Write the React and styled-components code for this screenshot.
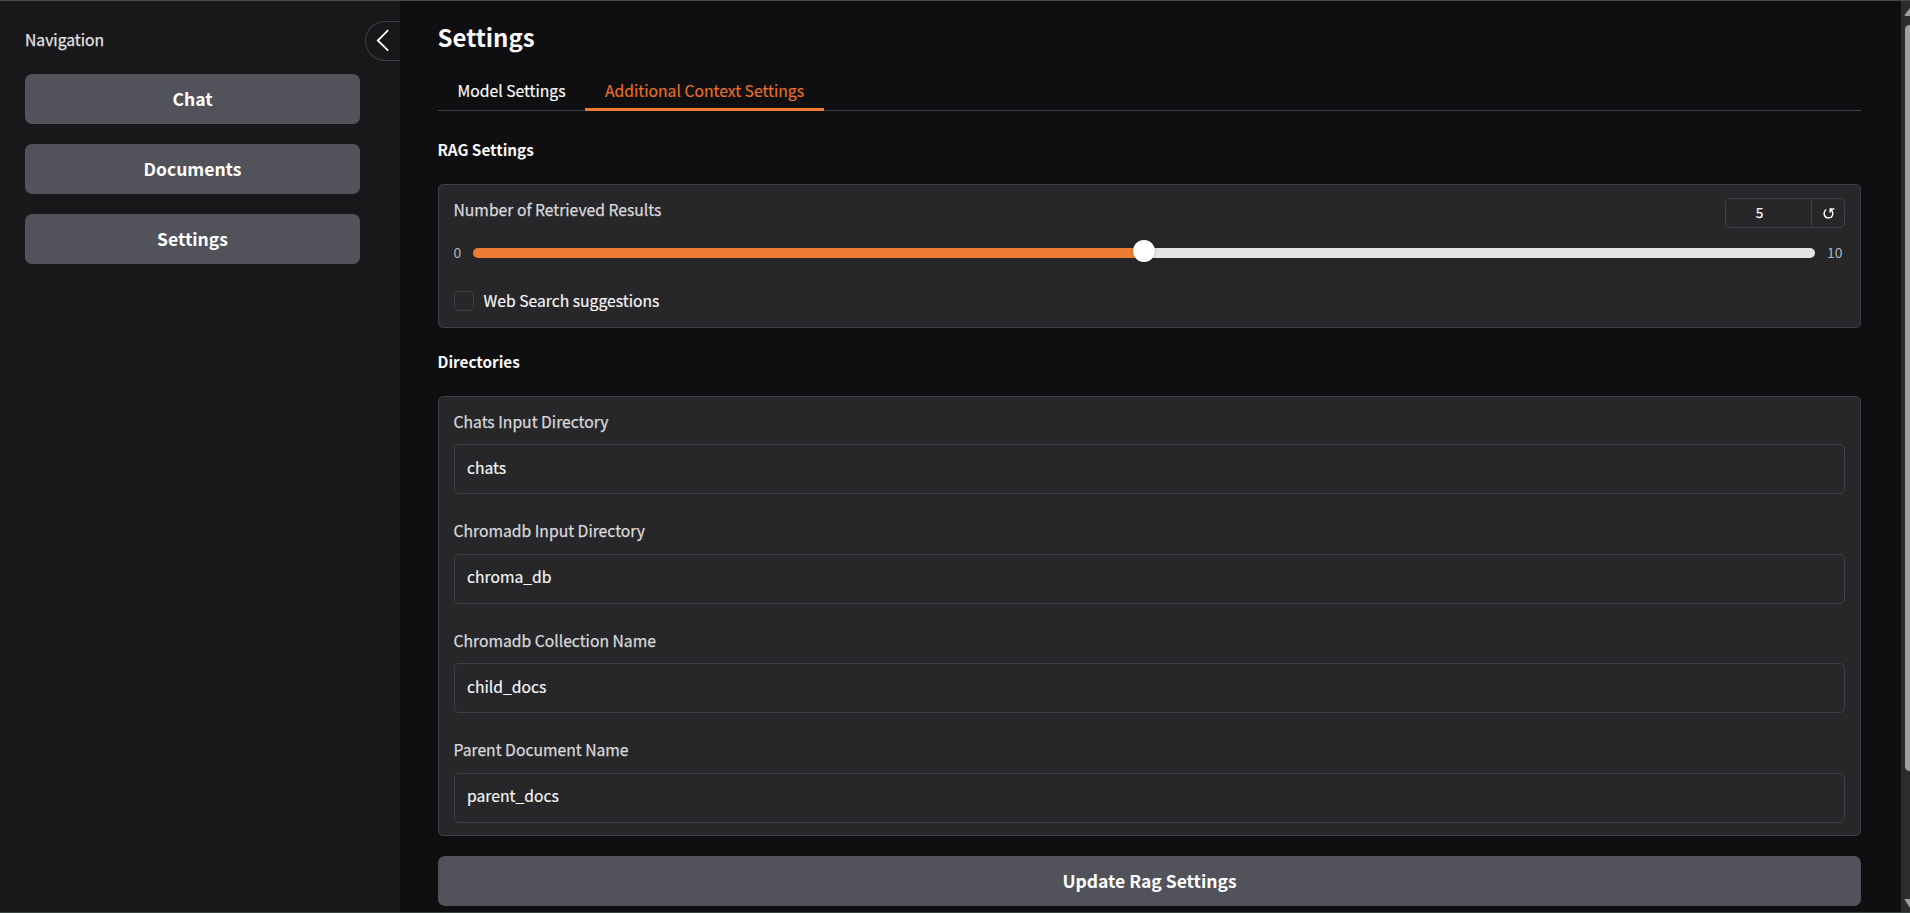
import React from "react";
import styled, { createGlobalStyle } from "styled-components";

const GlobalStyle = createGlobalStyle`
  *, *::before, *::after { box-sizing: border-box; }
  body {
    margin: 0;
    background: #0f0f11;
    color: #f8f8f9;
    font-family: "Noto Sans CJK SC", "Source Sans Pro", sans-serif;
    font-size: 15.7px;
    line-height: 26px;
    overflow: hidden;
  }
  button, input { font: inherit; color: inherit; }
`;

const Page = styled.div`
  display: flex;
  height: 913px;
  border-top: 1px solid #48494a;
  border-bottom: 1px solid #3c4444;
  overflow: hidden;
`;

const Sidebar = styled.aside`
  display: flex;
  flex-direction: column;
  flex: none;
  width: 400px;
  padding: 20px 0 0 25px;
  background: #18181a;
`;

const SidebarHeader = styled.div`
  display: flex;
  justify-content: space-between;
  height: 40px;
  margin-bottom: 13px;
`;

const SidebarTitle = styled.div`
  line-height: 38px;
  color: #e4e4e7;
  -webkit-text-stroke: 0.25px currentColor;
`;

const CollapseButton = styled.button`
  width: 35px;
  height: 40px;
  padding: 0;
  border: 1px solid #3f3f46;
  border-right: 0;
  border-radius: 20px 0 0 20px;
  background: transparent;

  svg { display: block; }
`;

const NavList = styled.nav`
  display: flex;
  flex-direction: column;
  gap: 20px;
  width: 335px;
`;

const Button = styled.button`
  width: 100%;
  height: 50px;
  flex: none;
  padding: 0;
  border: 0;
  border-radius: 7px;
  background: #52525b;
  color: #fff;
  font-size: 17.5px;
  font-weight: 700;
  line-height: 50px;
  text-align: center;
`;

const Main = styled.main`
  display: flex;
  flex-direction: column;
  width: 1423px;
  margin-left: 38px;
  flex: none;
`;

const Title = styled.h2`
  margin: 17px 0 0 -0.5px;
  height: 38px;
  font-size: 24px;
  font-weight: 700;
  line-height: 38px;
`;

const TabBar = styled.div`
  display: flex;
  height: 55px;
  padding-top: 15px;
  box-shadow: inset 0 -1px 0 #3f3f46;
`;

const Tab = styled.button`
  height: 40px;
  padding: 1px 20px 0 ${(p) => (p.$active ? "20px" : "19.5px")};
  width: ${(p) => (p.$active ? "239px" : "147px")};
  border: 0;
  border-bottom: 3px solid ${(p) => (p.$active ? "#ed7b34" : "transparent")};
  background: transparent;
  color: ${(p) => (p.$active ? "#ea6f2c" : "#fff")};
  line-height: 38px;
  white-space: nowrap;
  -webkit-text-stroke: 0.15px currentColor;
`;

const SectionTitle = styled.h3`
  margin: ${(p) => (p.$first ? "25px 0 22px -0.5px" : "20px 0 22px -0.5px")};
  font-size: 15.3px;
  font-weight: 700;
  line-height: 26px;
`;

const Card = styled.section`
  display: flex;
  flex-direction: column;
  flex: none;
  height: ${(p) => p.$height}px;
  padding: 11.5px 15px 0;
  border: 1px solid #3f3f46;
  border-radius: 5px;
  background: #27272a;
`;

const Label = styled.span`
  display: block;
  height: 26px;
  margin-left: -0.5px;
  color: #d9d9dc;
  -webkit-text-stroke: 0.25px currentColor;
`;

const SliderHead = styled.div`
  display: flex;
  justify-content: space-between;
  height: 31.5px;
`;

const NumberBox = styled.div`
  display: flex;
  width: 120px;
  height: 30px;
  margin-top: 1.5px;
  border: 1px solid #3f3f46;
  border-radius: 5px;
`;

const NumberValue = styled.div`
  flex: 1;
  padding-right: 18px;
  border-right: 1px solid #3f3f46;
  font-size: 13.7px;
  line-height: 26px;
  text-align: center;
  -webkit-text-stroke: 0.25px currentColor;
`;

const ResetButton = styled.button`
  display: flex;
  width: 32px;
  padding: 9px 0 0 11px;
  border: 0;
  background: transparent;
`;

const SliderRow = styled.div`
  display: flex;
  align-items: center;
  height: 20px;
  margin-top: 14px;
`;

const Bound = styled.span`
  width: ${(p) => (p.$end ? "30px" : "19px")};
  padding-left: ${(p) => (p.$end ? "12px" : "0")};
  margin-left: ${(p) => (p.$end ? "0" : "-0.5px")};
  margin-right: ${(p) => (p.$end ? "0" : "0.5px")};
  color: #b4b4bc;
  font-size: 13.9px;
  line-height: 20px;
`;

const Track = styled.div`
  display: flex;
  align-items: center;
  flex: 1;
  height: 10px;
  margin-top: 2px;
  border-radius: 5px;
  background: linear-gradient(to right, #ed7b34 50%, #e4e4e7 50%);
`;

const Thumb = styled.div`
  width: 22px;
  height: 22px;
  margin: -4px auto 0;
  border-radius: 50%;
  background: #fff;
  box-shadow: 0 0 2px rgba(0, 0, 0, 0.35);
`;

const CheckRow = styled.label`
  display: flex;
  align-items: center;
  gap: 9px;
  height: 26px;
  margin-top: 25px;
`;

const CheckBox = styled.span`
  width: 20px;
  height: 20px;
  margin-top: 1px;
  border: 1px solid #3f3f46;
  border-radius: 5px;
`;

const CheckText = styled.span`
  height: 26px;
  padding-top: 1px;
  margin-left: 0.5px;
  -webkit-text-stroke: 0.15px currentColor;
`;

const Field = styled.label`
  display: flex;
  flex-direction: column;
  flex: none;
  height: 109.6px;
`;

const FieldInput = styled.input`
  width: 100%;
  height: 50px;
  margin-top: 9.55px;
  padding: 0 12px 3.7px;
  border: 1px solid #3f3f46;
  border-radius: 5px;
  outline: 0;
  background: transparent;
  -webkit-text-stroke: 0.15px currentColor;
`;

const Submit = styled(Button)`
  margin-top: 20px;
`;

const Scrollbar = styled.div`
  display: flex;
  flex-direction: column;
  justify-content: space-between;
  flex: none;
  width: 9px;
  margin-left: 40px;
  background: #2c2c2c;

  svg { display: block; }
`;

const ScrollThumb = styled.div`
  height: 746px;
  margin: 0 -4px 0 4px;
  border-radius: 5px;
  background: #9f9f9f;
`;

const ScrollEnd = styled.div`
  height: ${(p) => p.$height}px;
`;

const fields = [
  ["Chats Input Directory", "chats"],
  ["Chromadb Input Directory", "chroma_db"],
  ["Chromadb Collection Name", "child_docs"],
  ["Parent Document Name", "parent_docs"],
];

export default function App() {
  return (
    <>
      <GlobalStyle />
      <Page>
        <Sidebar>
          <SidebarHeader>
            <SidebarTitle>Navigation</SidebarTitle>
            <CollapseButton aria-label="Collapse">
              <svg width="34" height="38" fill="none" stroke="#fff" strokeWidth="1.8">
                <path d="M22.2 8.2 L11.8 18.5 L22.2 28.7" />
              </svg>
            </CollapseButton>
          </SidebarHeader>
          <NavList>
            <Button>Chat</Button>
            <Button>Documents</Button>
            <Button>Settings</Button>
          </NavList>
        </Sidebar>
        <Main>
          <Title>Settings</Title>
          <TabBar>
            <Tab>Model Settings</Tab>
            <Tab $active>Additional Context Settings</Tab>
          </TabBar>
          <SectionTitle $first>RAG Settings</SectionTitle>
          <Card $height={144}>
            <SliderHead>
              <Label>Number of Retrieved Results</Label>
              <NumberBox>
                <NumberValue>5</NumberValue>
                <ResetButton aria-label="Reset">
                  <svg width="12" height="12" fill="none" stroke="#fff" strokeWidth="1.4">
                    <path d="M3.2 1.5 C-0.4 4.3 0.9 9.9 5.4 9.9 C10 9.9 11.3 4.6 7.8 1.6" />
                    <path d="M11.3 1 H7.2 V4.8" />
                  </svg>
                </ResetButton>
              </NumberBox>
            </SliderHead>
            <SliderRow>
              <Bound>0</Bound>
              <Track>
                <Thumb />
              </Track>
              <Bound $end>10</Bound>
            </SliderRow>
            <CheckRow>
              <CheckBox />
              <CheckText>Web Search suggestions</CheckText>
            </CheckRow>
          </Card>
          <SectionTitle>Directories</SectionTitle>
          <Card $height={440}>
            {fields.map(([label, value]) => (
              <Field key={label}>
                <Label>{label}</Label>
                <FieldInput defaultValue={value} />
              </Field>
            ))}
          </Card>
          <Submit>Update Rag Settings</Submit>
        </Main>
        <Scrollbar>
          <ScrollEnd $height={24}>
            <svg width="9" height="20" fill="#9f9f9f">
              <path d="M3.5 14 L9 7 V15 H4.3 Z" />
            </svg>
          </ScrollEnd>
          <ScrollThumb />
          <ScrollEnd $height={141}>
            <svg width="9" height="141">
              <path d="M3.3 128 H9 V137 Z" fill="#9f9f9f" />
            </svg>
          </ScrollEnd>
        </Scrollbar>
      </Page>
    </>
  );
}
